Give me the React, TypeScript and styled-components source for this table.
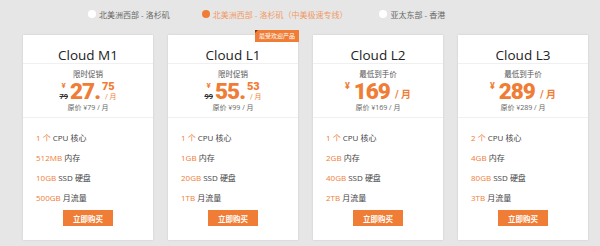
import styled, { createGlobalStyle } from "styled-components";

const GlobalStyle = createGlobalStyle`
  html, body {
    margin: 0;
    padding: 0;
    background: #e6e6e6;
  }
  body {
    font-family: "Open Sans", "Noto Sans CJK SC", sans-serif;
    color: #333;
  }
`;

const ORANGE = "#ef7d36";

type Plan = {
  name: string;
  tag: string;
  price: string;
  cents?: string;
  was?: string;
  origin: string;
  specs: [string, string][];
  hot?: boolean;
};

const plans: Plan[] = [
  {
    name: "Cloud M1",
    tag: "限时促销",
    price: "27",
    cents: "75",
    was: "79",
    origin: "原价 ¥79 / 月",
    specs: [
      ["1 个", "CPU 核心"],
      ["512MB", "内存"],
      ["10GB", "SSD 硬盘"],
      ["500GB", "月流量"],
    ],
  },
  {
    name: "Cloud L1",
    tag: "限时促销",
    price: "55",
    cents: "53",
    was: "99",
    origin: "原价 ¥99 / 月",
    hot: true,
    specs: [
      ["1 个", "CPU 核心"],
      ["1GB", "内存"],
      ["20GB", "SSD 硬盘"],
      ["1TB", "月流量"],
    ],
  },
  {
    name: "Cloud L2",
    tag: "最低到手价",
    price: "169",
    origin: "原价 ¥169 / 月",
    specs: [
      ["1 个", "CPU 核心"],
      ["2GB", "内存"],
      ["40GB", "SSD 硬盘"],
      ["2TB", "月流量"],
    ],
  },
  {
    name: "Cloud L3",
    tag: "最低到手价",
    price: "289",
    origin: "原价 ¥289 / 月",
    specs: [
      ["2 个", "CPU 核心"],
      ["4GB", "内存"],
      ["80GB", "SSD 硬盘"],
      ["3TB", "月流量"],
    ],
  },
];

const regions = [
  { label: "北美洲西部 - 洛杉矶", active: false },
  { label: "北美洲西部 - 洛杉矶（中美极速专线）", active: true },
  { label: "亚太东部 - 香港", active: false },
];

export default function App() {
  return (
    <>
      <GlobalStyle />
      <Page>
        <RegionBar>
          {regions.map((r) => (
            <RegionItem key={r.label} active={r.active}>
              <Dot active={r.active} />
              {r.label}
            </RegionItem>
          ))}
        </RegionBar>
        <CardRow>
          {plans.map((p) => (
            <Card key={p.name}>
              {p.hot && <Badge>最受欢迎产品</Badge>}
              <Title>{p.name}</Title>
              <PriceBox>
                <Tag>{p.tag}</Tag>
                <PriceLine>
                  {p.was ? (
                    <SideCol>
                      <Yen>¥</Yen>
                      <Was>{p.was}</Was>
                    </SideCol>
                  ) : (
                    <BigYen>¥</BigYen>
                  )}
                  <Amount>
                    {p.price}
                    {p.cents && "."}
                  </Amount>
                  {p.cents ? (
                    <CentsCol>
                      <Cents>{p.cents}</Cents>
                      <PerSmall>/ 月</PerSmall>
                    </CentsCol>
                  ) : (
                    <Per>/ 月</Per>
                  )}
                </PriceLine>
                <Origin>{p.origin}</Origin>
              </PriceBox>
              <Specs>
                {p.specs.map(([v, l]) => (
                  <Spec key={l}>
                    <em>{v}</em> {l}
                  </Spec>
                ))}
              </Specs>
              <BuyButton>立即购买</BuyButton>
            </Card>
          ))}
        </CardRow>
      </Page>
    </>
  );
}

const Page = styled.div`
  width: 600px;
  height: 246px;
  overflow: hidden;
`;

const RegionBar = styled.div`
  display: flex;
  align-items: center;
  height: 28px;
  padding-left: 88px;
  gap: 32px;
`;

const RegionItem = styled.div<{ active: boolean }>`
  display: flex;
  align-items: center;
  gap: 3px;
  font-size: 8px;
  color: ${(p) => (p.active ? "#f09a66" : "#666")};
`;

const Dot = styled.span<{ active: boolean }>`
  width: 8px;
  height: 8px;
  border-radius: 50%;
  background: ${(p) => (p.active ? ORANGE : "#fff")};
`;

const CardRow = styled.div`
  display: flex;
  gap: 15px;
  padding: 7px 0 0 23px;
`;

const Card = styled.div`
  position: relative;
  width: 130px;
  height: 205px;
  background: #fff;
  box-shadow: 0 0 2px rgba(0, 0, 0, 0.12);
  display: flex;
  flex-direction: column;
`;

const Badge = styled.div`
  position: absolute;
  top: -5px;
  right: -1px;
  height: 12px;
  padding: 0 4px;
  background: ${ORANGE};
  color: #fff;
  font-size: 6px;
  line-height: 12px;
  &::before {
    content: "";
    position: absolute;
    left: 0;
    top: 0;
    border-style: solid;
    border-width: 3px 3px 0 0;
    border-color: #7a3a12 transparent transparent transparent;
  }
`;

const Title = styled.div`
  height: 16px;
  padding-top: 12px;
  line-height: 16px;
  text-align: center;
  font-size: 13.5px;
  color: #222;
  border-bottom: 1px solid #f0f0f0;
`;

const PriceBox = styled.div`
  height: 53px;
  border-bottom: 1px solid #f0f0f0;
  display: flex;
  flex-direction: column;
  align-items: center;
`;

const Tag = styled.div`
  font-size: 7.5px;
  color: #555;
  margin-top: 6px;
  line-height: 8px;
`;

const PriceLine = styled.div`
  display: flex;
  align-items: stretch;
  height: 26px;
  color: ${ORANGE};
  font-family: Roboto, "Noto Sans CJK SC", sans-serif;
  font-weight: 700;
`;

const SideCol = styled.div`
  display: flex;
  flex-direction: column;
  justify-content: space-between;
  align-items: center;
  margin-right: 2px;
`;

const Yen = styled.span`
  font-size: 8px;
  line-height: 10px;
  margin-top: 3px;
`;

const BigYen = styled.span`
  font-size: 9px;
  line-height: 10px;
  margin: 3px 4px 0 0;
`;

const Was = styled.span`
  font-size: 7.5px;
  line-height: 9px;
  margin-bottom: 3px;
  color: #333;
  text-decoration: line-through;
`;

const Amount = styled.span`
  font-size: 22.5px;
  font-weight: 900;
  line-height: 26px;
  letter-spacing: -1px;
`;

const CentsCol = styled.div`
  display: flex;
  flex-direction: column;
  justify-content: space-between;
  margin-left: 2px;
`;

const Cents = styled.span`
  font-size: 11px;
  font-weight: 900;
  line-height: 12px;
  margin-top: 3px;
`;

const PerSmall = styled.span`
  font-size: 7px;
  font-weight: 400;
  line-height: 9px;
  margin-bottom: 3px;
  padding-left: 3px;
`;

const Per = styled.span`
  align-self: flex-end;
  font-size: 10px;
  line-height: 12px;
  margin: 0 0 3px 5px;
`;

const Origin = styled.div`
  font-size: 7px;
  color: #666;
  line-height: 7px;
`;

const Specs = styled.ul`
  list-style: none;
  margin: 0;
  padding: 15px 0 0 13px;
  display: flex;
  flex-direction: column;
  gap: 10px;
`;

const Spec = styled.li`
  font-size: 8px;
  line-height: 10px;
  color: #444;
  em {
    font-style: normal;
    color: ${ORANGE};
  }
`;

const BuyButton = styled.button`
  align-self: center;
  margin-top: 7px;
  width: 50px;
  height: 16px;
  padding: 0;
  border: none;
  background: ${ORANGE};
  color: #fff;
  font-family: "Noto Sans CJK SC", sans-serif;
  font-size: 7.5px;
  font-weight: 700;
`;
